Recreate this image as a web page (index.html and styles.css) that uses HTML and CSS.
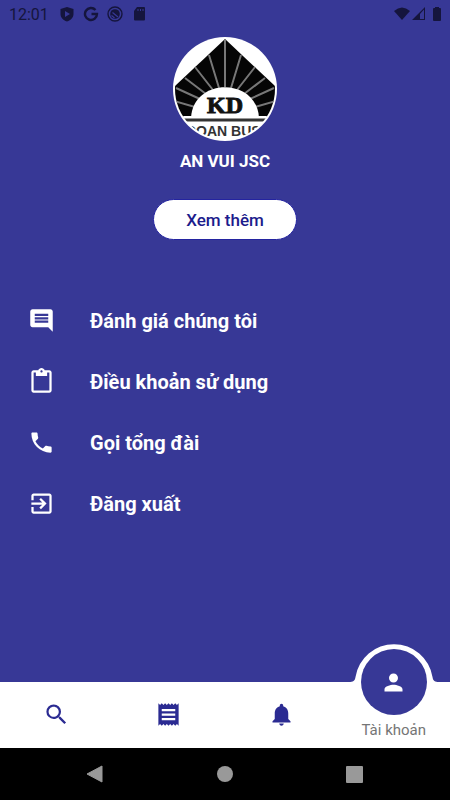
FILE: index.html
```html
<!DOCTYPE html>
<html lang="vi">

<head>
    <meta charset="UTF-8">
    <meta name="viewport" content="width=device-width, initial-scale=1.0">
    <title>Tài khoản</title>
    <link rel="stylesheet" href="styles.css">
</head>

<body>

    <header class="status">
        <span class="clock">12:01</span>
        <svg class="s-icon" viewBox="0 0 16 16"><path fill-rule="evenodd" d="M8 1l6.500 2v5c0 3.500-2.500 6-6.500 7.500C4 14 1.500 11.500 1.500 8V3zM6 5v6l5-3z"/></svg>
        <svg class="s-icon" viewBox="0 0 16 16"><path d="M12.500 4A6 6 0 1 0 14 8H8.500" fill="none" stroke="currentColor" stroke-width="2.400"/></svg>
        <svg class="s-icon" viewBox="0 0 16 16"><circle cx="8" cy="8" r="7" fill="none" stroke="currentColor" stroke-width="1.400"/><circle cx="8" cy="8" r="4.800"/><path d="M5.500 6.500l5.500 4.500M4.500 9.500l3 2.500" stroke="#373896" stroke-width="1.200"/></svg>
        <svg class="s-icon" viewBox="0 0 16 16"><path fill-rule="evenodd" d="M6 1h7q1 0 1 1v11.500q0 1-1 1H4q-1 0-1-1V5zM6.500 3v2h1V3zM9 3v2h1V3zM11.500 3v2h1V3z"/></svg>
        <span class="status-right">
            <svg width="18" height="16" viewBox="0 0 18 16"><path d="M1 5Q9-2 17 5L9 14z"/></svg>
            <svg width="14" height="16" viewBox="0 0 14 16"><path fill-rule="evenodd" d="M0 14L13 1v13zM8 8v5h4V3.500z"/></svg>
            <svg class="battery" width="8" height="16" viewBox="0 0 8 16"><path d="M2 1h4v1h1q1 0 1 1v11q0 1-1 1H1q-1 0-1-1V3q0-1 1-1h1z"/></svg>
        </span>
    </header>

    <main class="account">
        <svg class="avatar" viewBox="0 0 104 104" role="img" aria-label="KD">
            <defs>
                <clipPath id="round"><circle cx="52" cy="52" r="50"/></clipPath>
            </defs>
            <circle cx="52" cy="52" r="52" fill="#fff"/>
            <g clip-path="url(#round)">
                <path d="M52 2L104 51V80H0V51z" fill="#050505"/>
                <path d="M52 50V3M58 51L68 18M64 53L82 30M71 57L92 41M77 62L101 51M82 70L103 64M46 51L36 18M40 53L22 30M33 57L12 41M27 62L3 51M22 70L1 64" stroke="#777" stroke-width="2"/>
                <path d="M18 81C20 40 84 40 86 81z" fill="#fff"/>
                <path d="M8 80H96" stroke="#fff" stroke-width="2"/>
                <path d="M10 83H94" stroke="#333" stroke-width="3"/>
                <text class="logo-kd" x="52" y="76">KD</text>
                <text class="logo-name" x="13" y="99">DOAN BUS</text>
            </g>
        </svg>
        <h1 class="name">AN VUI JSC</h1>
        <button class="more" type="button">Xem thêm</button>

        <nav class="menu">
            <a href="#rate">
                <svg class="icon" viewBox="0 0 24 24"><path d="M21.990 4c0-1.100-.890-2-1.990-2H4c-1.100 0-2 .900-2 2v12c0 1.100.900 2 2 2h14l4 4-.010-18zM18 14H6v-2h12v2zm0-3H6V9h12v2zm0-3H6V6h12v2z"/></svg>
                Đánh giá chúng tôi
            </a>
            <a href="#terms">
                <svg class="icon" viewBox="0 0 24 24"><path d="M19 2h-4.180C14.400.840 13.300 0 12 0S9.600.840 9.180 2H5c-1.100 0-2 .900-2 2v16c0 1.100.900 2 2 2h14c1.100 0 2-.900 2-2V4c0-1.100-.900-2-2-2zm-7 0c.550 0 1 .450 1 1s-.450 1-1 1-1-.450-1-1 .450-1 1-1zm7 18H5V4h2v3h10V4h2v16z"/></svg>
                Điều khoản sử dụng
            </a>
            <a href="#call">
                <svg class="icon" viewBox="0 0 24 24"><path d="M6.620 10.790c1.440 2.830 3.760 5.140 6.590 6.590l2.200-2.200c.270-.270.670-.360 1.020-.240 1.120.370 2.330.570 3.570.570.550 0 1 .450 1 1V20c0 .550-.450 1-1 1-9.390 0-17-7.610-17-17 0-.550.450-1 1-1h3.500c.550 0 1 .450 1 1 0 1.250.200 2.450.570 3.570.110.350.030.740-.250 1.020l-2.200 2.200z"/></svg>
                Gọi tổng đài
            </a>
            <a href="#logout">
                <svg class="icon" viewBox="0 0 24 24"><path d="M10.090 15.590L11.500 17l5-5-5-5-1.410 1.410L12.670 11H3v2h9.670l-2.580 2.590zM19 3H5c-1.110 0-2 .900-2 2v4h2V5h14v14H5v-4H3v4c0 1.100.890 2 2 2h14c1.100 0 2-.900 2-2V5c0-1.100-.900-2-2-2z"/></svg>
                Đăng xuất
            </a>
        </nav>
    </main>

    <nav class="tabs">
        <a href="#search" aria-label="Tìm kiếm">
            <svg class="icon" viewBox="0 0 24 24"><path d="M15.500 14h-.790l-.280-.270A6.470 6.470 0 0 0 16 9.500 6.500 6.500 0 1 0 9.500 16c1.610 0 3.090-.590 4.230-1.570l.270.280v.790l5 4.990L20.490 19l-4.990-5zm-6 0C7.010 14 5 11.990 5 9.500S7.010 5 9.500 5 14 7.010 14 9.500 11.990 14 9.500 14z"/></svg>
        </a>
        <a href="#tickets" aria-label="Vé">
            <svg class="icon" viewBox="0 0 24 24"><path d="M18 17H6v-2h12v2zm0-4H6v-2h12v2zm0-4H6V7h12v2zM3 22l1.500-1.500L6 22l1.500-1.500L9 22l1.500-1.500L12 22l1.500-1.500L15 22l1.500-1.500L18 22l1.500-1.500L21 22V2l-1.500 1.500L18 2l-1.500 1.500L15 2l-1.500 1.500L12 2l-1.500 1.500L9 2 7.500 3.500 6 2 4.500 3.500 3 2v20z"/></svg>
        </a>
        <a href="#notice" aria-label="Thông báo">
            <svg class="icon" viewBox="0 0 24 24"><path d="M12 22c1.100 0 2-.900 2-2h-4c0 1.100.890 2 2 2zm6-6v-5c0-3.070-1.640-5.640-4.500-6.320V4c0-.830-.670-1.500-1.500-1.500s-1.500.670-1.500 1.500v.680C7.630 5.360 6 7.920 6 11v5l-2 2v1h16v-1l-2-2z"/></svg>
        </a>
        <a class="active" href="#account">
            <svg class="bump" viewBox="0 0 90 40"><path d="M0 40V39C4 39 6 38 6.500 34A39 39 0 0 1 83.500 34C84 38 86 39 90 39V40z" fill="#fff"/></svg>
            <span class="bubble">
                <svg class="icon" viewBox="0 0 24 24"><path d="M12 12c2.210 0 4-1.790 4-4s-1.790-4-4-4-4 1.790-4 4 1.790 4 4 4zm0 2c-2.670 0-8 1.340-8 4v2h16v-2c0-2.660-5.330-4-8-4z"/></svg>
            </span>
            Tài khoản
        </a>
    </nav>

    <footer class="system">
        <button type="button" aria-label="Back"><svg viewBox="0 0 20 20"><path d="M17 2v16L2 10z" stroke="currentColor" stroke-linejoin="round"/></svg></button>
        <button type="button" aria-label="Home"><svg viewBox="0 0 20 20"><circle cx="10" cy="10" r="8"/></svg></button>
        <button type="button" aria-label="Recent"><svg viewBox="0 0 20 20"><rect x="1" y="2" width="17" height="17" rx="1"/></svg></button>
    </footer>

</body>

</html>
```

FILE: styles.css
```css
* {
    box-sizing: border-box;
}

body {
    margin: 0;
    min-height: 100vh;
    display: flex;
    flex-direction: column;
    background-color: #373896;
    font-family: Roboto, "Noto Sans", sans-serif;
}

svg {
    display: block;
    fill: currentColor;
}

a {
    color: inherit;
    text-decoration: none;
}

.icon {
    width: 27px;
    height: 27px;
}

.status {
    display: flex;
    align-items: center;
    gap: 8px;
    height: 28px;
    padding: 0 9px;
    color: #15153d;
}

.clock {
    font-size: 16px;
    margin-right: 2px;
}

.s-icon {
    width: 16px;
    height: 16px;
}

.status-right {
    display: flex;
    gap: 1px;
    margin-left: auto;
}

.battery {
    margin-left: 6px;
}

.account {
    flex: 1;
    display: flex;
    flex-direction: column;
    align-items: center;
    padding-top: 9px;
    color: #fff;
}

.avatar {
    width: 104px;
    height: 104px;
}

.logo-kd {
    font: bold 24px "Liberation Serif", serif;
    text-anchor: middle;
    fill: #111;
    stroke: #111;
}

.logo-name {
    font: bold 14px "Liberation Sans", sans-serif;
    fill: #333;
}

.name {
    margin: 10px 0 28px;
    font-size: 17px;
    font-weight: 700;
    line-height: 20px;
}

.more {
    width: 144px;
    height: 41px;
    border: 1px solid #2424a0;
    border-radius: 21px;
    background-color: #fff;
    color: #1c1c8c;
    font-family: inherit;
    font-size: 17px;
    font-weight: 500;
}

.menu {
    align-self: stretch;
    margin-top: 50px;
}

.menu a {
    display: flex;
    align-items: center;
    gap: 35px;
    height: 61px;
    padding-left: 28px;
    font-size: 20px;
    font-weight: 700;
}

.tabs {
    display: flex;
    height: 66px;
    background-color: #fff;
    color: #2b2b92;
}

.tabs a {
    flex: 1;
    display: flex;
    justify-content: center;
    align-items: center;
    padding-bottom: 1px;
}

.tabs .active {
    position: relative;
    align-items: flex-end;
    padding-bottom: 8px;
    color: #757575;
    font-size: 15px;
    line-height: 20px;
}

/* white curve rising out of the bar behind the active tab */
.bump {
    position: absolute;
    top: -39px;
    left: 50%;
    width: 90px;
    height: 40px;
    margin-left: -45px;
}

.bubble {
    position: absolute;
    top: -33px;
    left: 50%;
    width: 66px;
    height: 66px;
    margin-left: -33px;
    display: flex;
    justify-content: center;
    align-items: center;
    border-radius: 50%;
    background-color: #373896;
    color: #fff;
}

.system {
    display: flex;
    justify-content: center;
    align-items: center;
    gap: 110px;
    height: 52px;
    background-color: #000;
}

.system button {
    width: 20px;
    height: 20px;
    padding: 0;
    border: 0;
    background: none;
    color: #999;
}
```
